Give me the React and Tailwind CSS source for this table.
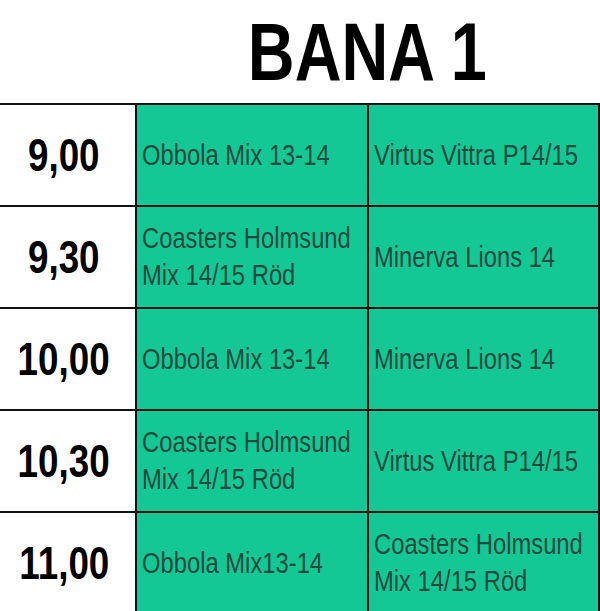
import React from 'react';

const rows = [
    { time: '9,00', home: ['Obbola Mix 13-14'], away: ['Virtus Vittra P14/15'] },
    { time: '9,30', home: ['Coasters Holmsund', 'Mix 14/15 Röd'], away: ['Minerva Lions 14'] },
    { time: '10,00', home: ['Obbola Mix 13-14'], away: ['Minerva Lions 14'] },
    { time: '10,30', home: ['Coasters Holmsund', 'Mix 14/15 Röd'], away: ['Virtus Vittra P14/15'] },
    { time: '11,00', home: ['Obbola Mix13-14'], away: ['Coasters Holmsund', 'Mix 14/15 Röd'] },
];

function TeamCell({ lines }) {
    return (
        <div className="bg-[#14c896] h-[100px] flex items-center pl-[5px] overflow-hidden">
            <div className="origin-left scale-x-[0.82] text-[29px] leading-[37px] text-[#1f4a3e] whitespace-nowrap">
                {lines.map((l, i) => (
                    <div key={i}>{l}</div>
                ))}
            </div>
        </div>
    );
}

export default function App() {
    return (
        <div className="w-[600px] h-[611px] overflow-hidden bg-white" style={{ fontFamily: '"Liberation Sans", Arial, sans-serif' }}>
            <div className="grid grid-cols-[135px_465px] h-[103px]">
                <div />
                <div className="flex justify-center pt-[12px]">
                    <div className="scale-x-[0.8] text-[81px] leading-[81px] font-bold text-black whitespace-nowrap">
                        BANA 1
                    </div>
                </div>
            </div>
            <div className="grid grid-cols-[135px_230px_229px] gap-[2px] bg-[#111] pt-[2px] pr-[2px]">
                {rows.map((r) => (
                    <React.Fragment key={r.time}>
                        <div className="bg-white h-[100px] flex items-center justify-center pr-[7px]">
                            <div className="scale-x-[0.8] text-[46px] leading-none font-bold text-black whitespace-nowrap">
                                {r.time}
                            </div>
                        </div>
                        <TeamCell lines={r.home} />
                        <TeamCell lines={r.away} />
                    </React.Fragment>
                ))}
            </div>
        </div>
    );
}
